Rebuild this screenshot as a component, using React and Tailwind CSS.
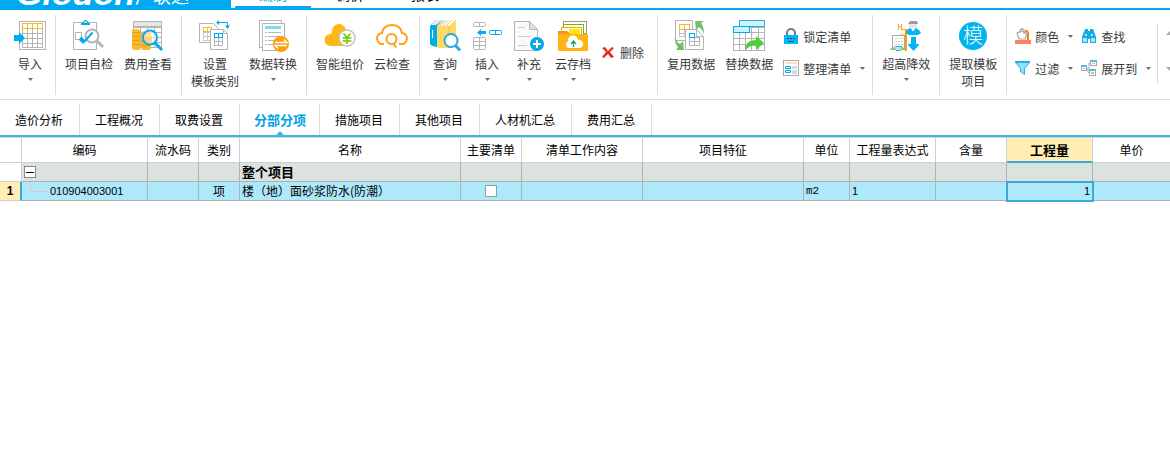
import { useState } from "react";

const GRAY = "#b4b4b4";
const BLUE = "#00aeef";
const ORANGE = "#fdb827";

function Icon({ children, size = 32 }) {
  return (
    <svg width={size} height={size} viewBox={`0 0 ${size} ${size}`} fill="none" className="shrink-0 overflow-visible" aria-hidden="true">
      {children}
    </svg>
  );
}

// table of lines, xs and ys are the line positions
function Grid({ xs, ys, color = GRAY, fill = "#fff" }) {
  const x0 = xs[0], x1 = xs[xs.length - 1];
  const y0 = ys[0], y1 = ys[ys.length - 1];
  return (
    <g shapeRendering="crispEdges">
      <rect x={x0} y={y0} width={x1 - x0} height={y1 - y0} fill={fill} />
      {xs.map((x) => <rect key={"x" + x} x={x} y={y0} width="1" height={y1 - y0 + 1} fill={color} />)}
      {ys.map((y) => <rect key={"y" + y} x={x0} y={y} width={x1 - x0 + 1} height="1" fill={color} />)}
    </g>
  );
}

function ImportIcon() {
  return (
    <Icon>
      <rect x="5.5" y="1.5" width="26" height="28" fill="#fff" stroke={GRAY} />
      <Grid xs={[8, 13, 18, 23, 28]} ys={[8, 13, 18, 23, 27]} />
      <Grid xs={[8, 13, 18, 23, 28]} ys={[3, 8]} color={ORANGE} />
      <path d="M0 15h5v-3l6 6-6 6v-3H0z" fill={BLUE} />
    </Icon>
  );
}

function CheckIcon() {
  return (
    <Icon>
      <rect x=".5" y="2.5" width="23" height="27" fill="#fff" stroke={GRAY} />
      <path d="M8 5V3h2c0-4 5-4 5 0h2v2z" fill={BLUE} />
      <rect x="11.500" y="1.500" width="2" height="1.500" fill="#fff" />
      <rect x="2.500" y="12.500" width="6" height="7" stroke={GRAY} />
      <circle cx="19" cy="16" r="6.500" fill="#fff" stroke={GRAY} strokeWidth="2" />
      <path d="M24 21l6 6" stroke={GRAY} strokeWidth="3" />
      <path d="M7 18l4.500 4.500" stroke={BLUE} strokeWidth="4" />
      <path d="M11.500 21.500l8-9" stroke={BLUE} strokeWidth="2" />
    </Icon>
  );
}

function FeeIcon() {
  return (
    <Icon>
      <Grid xs={[1, 8, 15, 22, 29]} ys={[1, 7, 12, 17, 22, 27]} />
      <rect x="1.500" y="1.500" width="28" height="5" fill="#e6e6e6" stroke={GRAY} />
      <path d="M0 11q0-2 4-2t4 2v19H4q-4 0-4-2zM9 13q1-2 5-2t5 2v15q0 2-5 2t-5-2z" fill="#fdb827" />
      <path d="M0 12q4 2 8 0M0 16q4 2 8 0M0 20q4 2 8 0M0 24q4 2 8 0M9 17q5 2 10 0M9 21q5 2 10 0M9 25q5 2 10 0" stroke="#f19a00" />
      <circle cx="18" cy="17.500" r="7" fill="#fff" fillOpacity=".6" stroke={BLUE} strokeWidth="2" />
      <path d="M13 16q5 2 7 0v7q-4 1-6-1z" fill="#ffd377" />
      <path d="M23 23l7 7" stroke={BLUE} strokeWidth="3" />
    </Icon>
  );
}

function TemplateIcon() {
  return (
    <Icon>
      <path d="M.5 3.500h14l5 5v14H.5z" fill="#fff" stroke={GRAY} />
      <Grid xs={[4, 8, 12]} ys={[12, 16, 20]} color="#c8c8c8" />
      <Grid xs={[4, 8, 12]} ys={[7, 11]} color={ORANGE} />
      <path d="M11.500 9.500h13l4 4v16h-17z" fill="#fff" stroke={GRAY} />
      <path d="M24.500 9.500v4h4" stroke={GRAY} />
      <Grid xs={[15, 19, 23]} ys={[17, 21, 25]} />
      <Grid xs={[15, 19, 23]} ys={[13, 17]} color={BLUE} />
      <path d="M18 2.500h10.500V7" stroke={BLUE} />
      <path d="M20 0v5l-3-2.500zM26 5.500h5L28.500 9z" fill={BLUE} />
    </Icon>
  );
}

function ConvertIcon() {
  return (
    <Icon>
      <rect x="2.500" y=".5" width="22" height="27" fill="#fff" stroke={GRAY} />
      <rect x="5.500" y="3.500" width="22" height="27" fill="#fff" stroke={GRAY} />
      <path d="M8 6h16v3H8z" fill="#7fdcf8" />
      <path d="M8 12.500h2m1 0h13M8 16.500h2m1 0h13M8 20.500h2m1 0h8M8 24.500h2m1 0h6" stroke={GRAY} />
      <circle cx="24" cy="24" r="8" fill="#ff9e0d" />
      <path d="M18 22.500h12l-3-3M30 25.500H18l3 3" stroke="#fff" strokeWidth="1.300" />
    </Icon>
  );
}

function SmartPriceIcon() {
  return (
    <Icon>
      <path d="M7 26a6 6 0 01-1-12c1 0 2-1 2-3a7 7 0 0114 0v15z" fill="#fdb813" />
      <circle cx="23" cy="18" r="8" fill="#fff" stroke="#c9c3b6" strokeWidth="1.500" />
      <path d="M19.500 13.500l3.500 4 3.500-4M18.500 18h9M18.500 21h9M23 17.500V24" stroke="#79c400" strokeWidth="1.600" />
    </Icon>
  );
}

function CloudCheckIcon() {
  return (
    <Icon>
      <path d="M8 24H7a5.500 5.500 0 01-1-11c1-5 4-8 10-8s9 3 10 8a5.500 5.500 0 01-1 11h-2" stroke="#ff9f1a" strokeWidth="2" />
      <circle cx="15.500" cy="19" r="5" stroke="#ff9f1a" strokeWidth="2" />
      <path d="M17.500 23.500l2.500 4" stroke="#ff9f1a" strokeWidth="2" />
    </Icon>
  );
}

function BooksIcon() {
  return (
    <Icon>
      <path d="M1 6l6-6h7L8 6v21l-5-1-2-2z" fill={BLUE} />
      <path d="M2 5l5-5h7L7 5z" fill="#fff" />
      <path d="M3.500 10v8" stroke="#fff" />
      <path d="M2 5l5-5M4.500 5l5-5M7 5l5-5" stroke={GRAY} strokeWidth=".7" />
      <path d="M8 6l7-6h12v22l-6 6H10l-2-1z" fill="#ffd966" />
      <path d="M10 6l6-6h10l-6 6z" fill="#fff" />
      <path d="M11 6l6-6M14 6l6-6M17 6l6-6" stroke="#d6ae59" strokeWidth=".7" />
      <path d="M20 6v22" stroke="#f1c143" />
      <circle cx="22" cy="20.500" r="6.500" fill="#fff" stroke="#29aae2" strokeWidth="2" />
      <path d="M26.500 25.500l4.500 5" stroke="#29aae2" strokeWidth="3" />
    </Icon>
  );
}

function InsertIcon() {
  return (
    <Icon>
      <rect x="2.500" y="2.500" width="12" height="4" rx="1" stroke={GRAY} />
      <path d="M8.500 2v5" stroke={GRAY} />
      <path d="M6 12.500l4-3.500v2h5v3h-5v2z" fill={BLUE} />
      <rect x="18.500" y="10.500" width="12" height="4" rx="1" stroke={BLUE} />
      <path d="M24.500 10v5" stroke={BLUE} />
      <rect x="2.500" y="17.500" width="12" height="12" rx="1" stroke={GRAY} />
      <path d="M8.500 17v13M2 21.500h13M2 25.500h13" stroke={GRAY} />
    </Icon>
  );
}

function SupplementIcon() {
  return (
    <Icon>
      <path d="M1.500 1.500h15l8 8v21h-23z" fill="#fafafa" stroke={GRAY} />
      <path d="M16.500 1.500v8h8z" fill="#e0e0e0" stroke={GRAY} />
      <path d="M5 7.500h7M5 16.500h13M5 25.500h9" stroke="#ccc" />
      <circle cx="24" cy="24" r="7" fill="#0aa7e6" />
      <path d="M20 24h8M24 20v8" stroke="#fff" strokeWidth="2" />
    </Icon>
  );
}

function ArchiveIcon() {
  return (
    <Icon>
      <rect x="6.500" y="1.500" width="23" height="12" fill="#fff" stroke="#9a9a6a" />
      <rect x="6.500" y="4.500" width="20" height="10" fill="#fff" stroke="#7ab800" />
      <rect x="4.500" y="7.500" width="20" height="10" fill="#fff" stroke="#f7a600" />
      <rect x="12" y="9" width="11" height="5" fill="#ffe900" />
      <path d="M1 11h9l3 3h18v16q0 1-1 1H2q-1 0-1-1z" fill="#fcb514" />
      <path d="M1 11h9l3 3H1z" fill="#f7941d" />
      <path d="M11 28a4 4 0 010-7 5 5 0 0110-1 4 4 0 012 8z" fill="#fff" />
      <path d="M16.500 27v-5M14 24l2.500-3 2.500 3" stroke="#00a651" strokeWidth="1.200" />
    </Icon>
  );
}

function ReuseIcon() {
  return (
    <Icon>
      <path d="M.5.5h17v20H.5z" fill="#fff" stroke={GRAY} />
      <Grid xs={[4, 9, 14]} ys={[9, 13, 16]} color="#c8c8c8" />
      <Grid xs={[4, 9, 14]} ys={[4, 9]} color={ORANGE} />
      <path d="M10.500 9.500h11l7 7v13h-18z" fill="#fff" stroke={GRAY} />
      <path d="M21.500 9.500v7h7" stroke={GRAY} />
      <Grid xs={[14, 19, 24]} ys={[17, 21, 25]} />
      <Grid xs={[14, 19]} ys={[13, 17]} color={BLUE} />
      <path d="M20 1h9l-3 2q3 4 3 11-2-5-5-7l-3 3z" fill="#73bf69" />
      <path d="M0 16q1 6 5 8l3-3 1 9H1l2-3Q-1 23 0 16z" fill="#73bf69" />
    </Icon>
  );
}

function ReplaceIcon() {
  return (
    <Icon>
      <Grid xs={[0, 6, 12, 18, 25, 31]} ys={[7, 12, 18, 24, 30]} />
      <rect x="6.500" y=".5" width="25" height="6" fill="#c8f3ff" stroke="#35aacb" />
      <rect x=".5" y="6.500" width="16" height="6" fill="#c8f3ff" stroke={BLUE} />
      <path d="M12 31q0-11 11-11v-4l8 7-8 7v-4q-7-1-11 5z" fill="#4fce3a" />
    </Icon>
  );
}

function HighRiseIcon() {
  return (
    <Icon>
      <rect x="2.500" y="15.500" width="12" height="14" fill="#fff" stroke="#a8a8a8" />
      <path d="M5 18.500h8M5 21.500h8M5 24.500h8" stroke="#ccc" strokeDasharray="2 1" />
      <path d="M6 26h5v4H6z" fill="#bfe3f5" />
      <path d="M5 26.500h7M6 30.500h5" stroke="#3ba7d6" />
      <path d="M0 30q1-3 5-3l1 3zM11 30v-3q4 0 5 3z" fill="#7cc576" />
      <path d="M8.500 4v6M11.500 4v6M8 7h4M11 9.500h5M10 15h6" stroke="#f7a61c" />
      <path d="M16 9v22" stroke="#ff9f0d" strokeWidth="2" />
      <path d="M19 3h8v4l-2 2h-4l-2-2z" fill="#e6e6e6" />
      <path d="M18 4l2-3h7l1 3z" fill="#9c9c9c" />
      <path d="M17 10l3-2 2 2h2l2-2 3 2 2 3-3 2h-9l-3-2z" fill="#00b4f5" />
      <path d="M22 8h2v3h-2z" fill="#fff" />
      <path d="M21 17h5v7h3v1l-5.500 6-5.500-6v-1h3z" fill="#00b4f5" />
    </Icon>
  );
}

function ExtractIcon() {
  return (
    <Icon>
      <circle cx="16" cy="16" r="14" fill="#00b4ee" />
      <text x="16" y="23" textAnchor="middle" fill="#fff" fontSize="20" fontWeight="300">模</text>
    </Icon>
  );
}

function DeleteIcon() {
  return (
    <Icon size={13}>
      <path d="M1 2l3-1 3 4 4-4 2 1-4 4 4 5-3 1-3-4-4 4-2-1 4-5z" fill="#ea2b22" />
    </Icon>
  );
}

function LockIcon() {
  return (
    <Icon size={16}>
      <path d="M4 8V5a4 4 0 018 0v3" stroke="#777b85" strokeWidth="2" />
      <path d="M1 7h14v9H1z" fill="#00b8f5" />
      <path d="M4 10.500h2m1 0h2m1 0h2M5 13.500h6" stroke="#16577c" />
    </Icon>
  );
}

function ArrangeIcon() {
  return (
    <Icon size={16}>
      <rect x=".5" y=".5" width="15" height="15" fill="#fff" stroke="#aaa" />
      <path d="M2 2h12v2H2z" fill="#fbe5b2" />
      <path d="M2.500 6.500h5v2h-5zM2.500 10.500h5v2h-5z" stroke={BLUE} />
      <path d="M9 6h5v3H9zM9 10h5v4H9z" fill="#d9d9d9" />
    </Icon>
  );
}

function ColorIcon() {
  return (
    <Icon size={16}>
      <path d="M2 5l2 6h6l2-5-5-3z" fill="#fff" stroke="#a6a6a6" strokeWidth="1.200" />
      <path d="M5 5V2l2-1.500L9 2v4" stroke="#a6a6a6" strokeWidth="1.200" />
      <path d="M10 3h2l1 2v7" stroke="#f08a1d" strokeWidth="2" />
      <path d="M0 12h16v4H0z" fill="#f7845c" />
    </Icon>
  );
}

function FilterIcon() {
  return (
    <Icon size={16}>
      <path d="M.5 1.500h14v1l-5 6v6l-4-3v-3l-5-6z" fill="#8fe0fa" stroke="#29aee0" />
      <path d="M0 1h15v2H0z" fill="#1fb1e8" />
    </Icon>
  );
}

function FindIcon() {
  return (
    <Icon size={16}>
      <path d="M4 1h3v2h2V1h3l3 8v6H9v-4H7v4H1V9z" fill="#12ace6" />
      <path d="M2 10h4v4H2zM10 10h4v4h-4zM4 6h2v2H4zM10 6h2v2h-2z" fill="#a9e7fb" />
    </Icon>
  );
}

function ExpandIcon() {
  return (
    <Icon size={16}>
      <path d="M6 8.500h2V3h2M7 8.500v4h2" stroke="#aaa" />
      <rect x=".5" y="5.500" width="5" height="5" fill="#fff" stroke="#aaa" />
      <rect x="9.500" y=".5" width="6" height="5" fill="#fff" stroke="#aaa" />
      <rect x="8.500" y="9.500" width="6" height="6" fill="#fff" stroke="#aaa" />
      <path d="M0 5h6v2H0zM9 0h7v2H9zM8 9h7v2H8z" fill="#4cc0ea" />
      <path d="M2 8h2v1H2zM11 3h3v1h-3zM10 12h3v2h-3z" fill="#c9c09b" />
    </Icon>
  );
}

function Caret() {
  return (
    <svg width="5" height="3" viewBox="0 0 5 3" className="shrink-0" aria-hidden="true">
      <path d="M0 0h5L2.500 3z" fill="#6b6b7b" />
    </svg>
  );
}

function ScrollButton({ label, d }) {
  return (
    <button aria-label={label} className="shrink-0">
      <svg width="8" height="4" viewBox="0 0 8 4" aria-hidden="true">
        <path d={d} fill="#a6a6a6" />
      </svg>
    </button>
  );
}

function BigButton({ icon, label, line2, caret }) {
  return (
    <button className="flex min-w-8 shrink-0 flex-col items-center whitespace-nowrap">
      {icon}
      <span className="mt-[3px]">{label}</span>
      {line2 && <span>{line2}</span>}
      {caret && <span className="flex h-3.5 items-center"><Caret /></span>}
    </button>
  );
}

function SmallButton({ icon, label, caret }) {
  return (
    <button className="flex h-4 items-center gap-1 whitespace-nowrap">
      {icon}
      <span>{label}</span>
      {caret && <span className="ml-[5px]"><Caret /></span>}
    </button>
  );
}

function Group({ children, className = "gap-2.5 px-[9px]" }) {
  return (
    <div className={`flex h-20 shrink-0 items-start border-r border-[#dcdcdc] pt-[5px] ${className}`}>
      {children}
    </div>
  );
}

function TitleBar() {
  return (
    <header className="flex h-2.5 items-end overflow-hidden border-b-2 border-[#00a9f1] bg-white">
      <div className="flex w-[231px] shrink-0 items-end bg-[#00a9f1] pl-4 text-white">
        <span className="font-['Liberation_Sans',sans-serif] text-[34px] leading-[30px] font-bold italic">Glodon</span>
        <span className="text-[18px] leading-[26px] whitespace-nowrap">广联达</span>
      </div>
      <nav className="flex items-end pl-1 text-[14px] leading-5">
        <button className="w-[76px] border-b-2 border-[#00a9f1] pb-0.5 text-[#00a9f1]">编制</button>
        <button className="w-[78px] pb-1">调价</button>
        <button className="w-[72px] pb-1">报表</button>
      </nav>
    </header>
  );
}

function Ribbon() {
  return (
    <div className="flex overflow-hidden border-b border-[#dcdcdc] pt-[5px] pb-1 text-[12px] leading-[17px] text-[#3a3a3a]">
      <Group className="pr-[9px] pl-3.5">
        <BigButton icon={<ImportIcon />} label="导入" caret />
      </Group>
      <Group className="gap-[11px] px-[9px]">
        <BigButton icon={<CheckIcon />} label="项目自检" />
        <BigButton icon={<FeeIcon />} label="费用查看" />
      </Group>
      <Group>
        <BigButton icon={<TemplateIcon />} label="设置" line2="模板类别" />
        <BigButton icon={<ConvertIcon />} label="数据转换" caret />
      </Group>
      <Group>
        <BigButton icon={<SmartPriceIcon />} label="智能组价" />
        <BigButton icon={<CloudCheckIcon />} label="云检查" />
      </Group>
      <Group className="gap-2.5 pr-[13px] pl-[9px]">
        <BigButton icon={<BooksIcon />} label="查询" caret />
        <BigButton icon={<InsertIcon />} label="插入" caret />
        <BigButton icon={<SupplementIcon />} label="补充" caret />
        <BigButton icon={<ArchiveIcon />} label="云存档" caret />
        <button className="flex h-16 items-center gap-1.5 whitespace-nowrap">
          <DeleteIcon />
          <span>删除</span>
        </button>
      </Group>
      <Group className="gap-2.5 pr-[7px] pl-[9px]">
        <BigButton icon={<ReuseIcon />} label="复用数据" />
        <BigButton icon={<ReplaceIcon />} label="替换数据" />
        <div className="flex flex-col items-start gap-4 pt-2">
          <SmallButton icon={<LockIcon />} label="锁定清单" />
          <SmallButton icon={<ArrangeIcon />} label="整理清单" caret />
        </div>
      </Group>
      <Group>
        <BigButton icon={<HighRiseIcon />} label="超高降效" caret />
      </Group>
      <Group>
        <BigButton icon={<ExtractIcon />} label="提取模板" line2="项目" />
      </Group>
      <div className="flex shrink-0 items-start gap-2 py-[9px] pl-2">
        <div className="flex gap-2 border-r border-[#dcdcdc] pt-1 pr-1.5 pb-2">
          <div className="flex flex-col items-start gap-4">
            <SmallButton icon={<ColorIcon />} label="颜色" caret />
            <SmallButton icon={<FilterIcon />} label="过滤" caret />
          </div>
          <div className="flex flex-col items-start gap-4">
            <SmallButton icon={<FindIcon />} label="查找" />
            <SmallButton icon={<ExpandIcon />} label="展开到" caret />
          </div>
        </div>
        <div className="flex flex-col gap-8 pt-[7px]">
          <ScrollButton label="向上滚动" d="M0 4h8L4 0z" />
          <ScrollButton label="向下滚动" d="M0 0h8L4 4z" />
        </div>
      </div>
    </div>
  );
}

const tabs = ["造价分析", "工程概况", "取费设置", "分部分项", "措施项目", "其他项目", "人材机汇总", "费用汇总"];

function Tabs() {
  const [active, setActive] = useState("分部分项");
  return (
    <nav className="flex border-b-2 border-[#3fb4e5] pt-1 text-[12px]">
      {tabs.map((tab) => (
        <button
          key={tab}
          onClick={() => setActive(tab)}
          className={`relative h-[31px] border-r border-[#dcdcdc] whitespace-nowrap ${
            tab === active ? "pr-[13px] pl-3.5 text-[13px] font-bold text-[#00a2e8]" : "pr-4 pl-[15px]"
          }`}
        >
          {tab}
          {tab === active && (
            <svg width="8" height="4" viewBox="0 0 8 4" className="absolute bottom-0 left-9" aria-hidden="true">
              <path d="M0 4l4-4 4 4z" fill="#3fb4e5" />
            </svg>
          )}
        </button>
      ))}
    </nav>
  );
}

const columns = [
  { name: "编码", w: "w-[126px]" },
  { name: "流水码", w: "w-[51px]" },
  { name: "类别", w: "w-[41px]" },
  { name: "名称", w: "w-[221px]" },
  { name: "主要清单", w: "w-[61px]" },
  { name: "清单工作内容", w: "w-[121px]" },
  { name: "项目特征", w: "w-[161px]" },
  { name: "单位", w: "w-[46px]" },
  { name: "工程量表达式", w: "w-[86px]" },
  { name: "含量", w: "w-[71px]" },
  { name: "工程量", w: "w-[86px]" },
  { name: "单价", w: "w-auto" },
];

const cell = "border-r border-b border-[#b0b0b0] p-0 last:border-r-0";

function BillTable() {
  const [open, setOpen] = useState(true);
  return (
    <table className="w-full table-fixed border-separate border-spacing-0 border-t border-[#d0d0d0] text-[12px] leading-[18px]">
      <colgroup>
        <col className="w-[22px]" />
        {columns.map((c) => <col key={c.name} className={c.w} />)}
      </colgroup>
      <thead>
        <tr className="h-[25px]">
          <th className="border-r border-b border-[#d0d0d0] p-0"></th>
          {columns.map((c) => (
            <th
              key={c.name}
              className={`border-r p-0 whitespace-nowrap last:border-r-0 ${
                c.name === "工程量"
                  ? "border-b-2 border-r-[#d0d0d0] border-b-[#3aa9d8] bg-[#ffedb3] text-[13px] font-bold"
                  : "border-b border-[#d0d0d0] font-normal"
              }`}
            >
              {c.name}
            </th>
          ))}
        </tr>
      </thead>
      <tbody>
        <tr className="h-[19px] bg-[#dae3df]">
          <td className="border-r border-b border-[#d0d0d0] bg-white p-0"></td>
          <td className={cell}>
            <button
              onClick={() => setOpen(!open)}
              aria-label="整个项目"
              className="ml-0.5 flex h-3 w-3 items-center justify-center border border-[#888] bg-white"
            >
              <span className="h-px w-2 bg-black" />
            </button>
          </td>
          <td className={cell}></td>
          <td className={cell}></td>
          <td className={`${cell} pl-0.5 text-[13px] font-bold`}>整个项目</td>
          {columns.slice(4).map((c) => <td key={c.name} className={cell}></td>)}
        </tr>
        {open && (
          <tr className="h-[19px] bg-[#aee9fb]">
            <th className="border-r-2 border-b border-r-[#3aa9d8] border-b-[#d0d0d0] bg-[#ffedb3] p-0 font-['Liberation_Sans',sans-serif] text-[12px] font-bold">1</th>
            <td className={cell}>
              <div className="flex gap-0.5 pl-2">
                <span className="h-2.5 w-[18px] border-b border-l border-[#d3c9cb]" />
                <span className="font-['Liberation_Sans',sans-serif] text-[11px]">010904003001</span>
              </div>
            </td>
            <td className={cell}></td>
            <td className={`${cell} text-center`}>项</td>
            <td className={`${cell} pl-0.5 whitespace-nowrap`}>楼（地）面砂浆防水(防潮）</td>
            <td className={`${cell} text-center`}>
              <input type="checkbox" aria-label="主要清单" className="mx-auto block h-3 w-3 appearance-none border border-[#999] bg-white checked:bg-[#3aa9d8]" />
            </td>
            <td className={cell}></td>
            <td className={cell}></td>
            <td className={`${cell} pl-0.5 font-['Liberation_Mono',monospace] text-[11px]`}>m2</td>
            <td className={`${cell} pl-0.5 font-['Liberation_Sans',sans-serif] text-[11px]`}>1</td>
            <td className={cell}></td>
            <td className={`${cell} pr-0.5 text-right font-['Liberation_Sans',sans-serif] text-[11px] outline-2 -outline-offset-1 outline-[#3aa9d8]`}>1</td>
            <td className={cell}></td>
          </tr>
        )}
      </tbody>
    </table>
  );
}

export default function App() {
  return (
    <div className="min-h-screen overflow-hidden bg-white font-['Noto_Sans_CJK_SC',sans-serif] text-black">
      <TitleBar />
      <Ribbon />
      <Tabs />
      <BillTable />
    </div>
  );
}
